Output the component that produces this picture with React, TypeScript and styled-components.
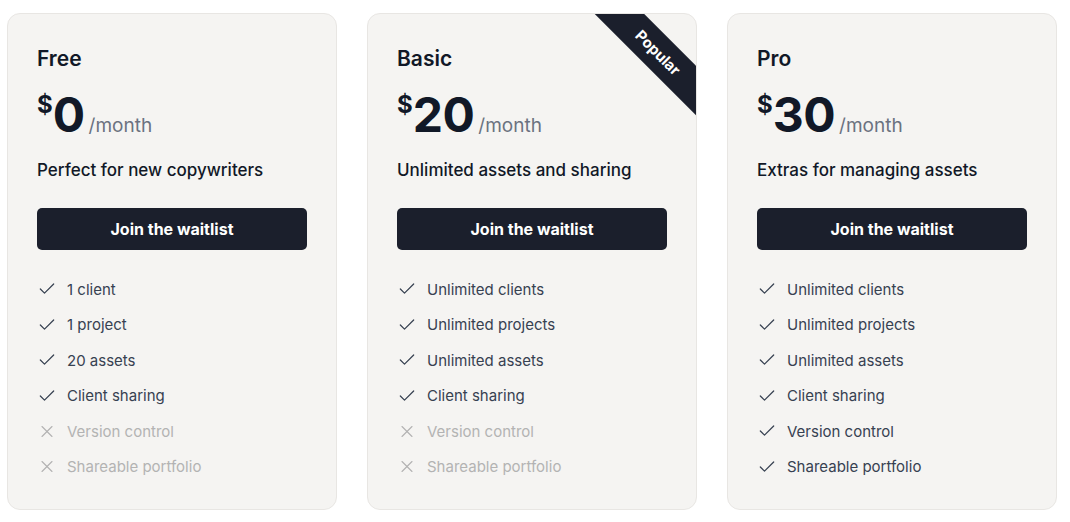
import * as React from "react";
import styled, { createGlobalStyle } from "styled-components";
import { Check, X } from "lucide-react";

interface IFeature {
  label: string;
  included: boolean;
}

interface IPlan {
  name: string;
  price: number;
  tagline: string;
  popular?: boolean;
  features: IFeature[];
}

const feature = (label: string, included = true): IFeature => ({ label, included });

const plans: IPlan[] = [
  {
    name: "Free",
    price: 0,
    tagline: "Perfect for new copywriters",
    features: [
      feature("1 client"),
      feature("1 project"),
      feature("20 assets"),
      feature("Client sharing"),
      feature("Version control", false),
      feature("Shareable portfolio", false)
    ]
  },
  {
    name: "Basic",
    price: 20,
    tagline: "Unlimited assets and sharing",
    popular: true,
    features: [
      feature("Unlimited clients"),
      feature("Unlimited projects"),
      feature("Unlimited assets"),
      feature("Client sharing"),
      feature("Version control", false),
      feature("Shareable portfolio", false)
    ]
  },
  {
    name: "Pro",
    price: 30,
    tagline: "Extras for managing assets",
    features: [
      feature("Unlimited clients"),
      feature("Unlimited projects"),
      feature("Unlimited assets"),
      feature("Client sharing"),
      feature("Version control"),
      feature("Shareable portfolio")
    ]
  }
];

const PlanCard = ({ plan }: { plan: IPlan }) => (
  <Card>
    {plan.popular && <Ribbon>Popular</Ribbon>}
    <PlanName>{plan.name}</PlanName>
    <PriceRow>
      <Currency>$</Currency>
      <Amount>{plan.price}</Amount>
      <Period>/month</Period>
    </PriceRow>
    <Tagline>{plan.tagline}</Tagline>
    <WaitlistButton type="button">Join the waitlist</WaitlistButton>
    <FeatureList>
      {plan.features.map(f => (
        <FeatureItem key={f.label} included={f.included}>
          <FeatureIcon>
            {f.included ? <Check size={20} strokeWidth={1.5} /> : <X size={23} strokeWidth={1.3} />}
          </FeatureIcon>
          {f.label}
        </FeatureItem>
      ))}
    </FeatureList>
  </Card>
);

export default function App() {
  return (
    <>
      <GlobalStyle />
      <Pricing>
        {plans.map(p => (
          <PlanCard key={p.name} plan={p} />
        ))}
      </Pricing>
    </>
  );
}

const GlobalStyle = createGlobalStyle`
  body {
    margin: 0;
    background: #ffffff;
    font-family: Inter, "Noto Sans", sans-serif;
    color: #111827;
  }
`;

const Pricing = styled.div`
  display: grid;
  grid-template-columns: repeat(3, 330px);
  gap: 30px;
  padding: 13px 0 0 7px;
`;

const Card = styled.div`
  position: relative;
  overflow: hidden;
  display: flex;
  flex-direction: column;
  padding: 31px 29px 30px;
  background: #f5f4f2;
  border: 1px solid #e8e6e3;
  border-radius: 13px;
`;

const Ribbon = styled.div`
  position: absolute;
  top: 20.5px;
  right: -62px;
  width: 200px;
  height: 35px;
  display: flex;
  align-items: center;
  justify-content: center;
  background: #1b1f2c;
  color: #ffffff;
  font-size: 15px;
  font-weight: 700;
  transform: rotate(45deg);
`;

const PlanName = styled.h2`
  margin: 0;
  font-size: 21px;
  line-height: 28px;
  font-weight: 600;
  color: #111827;
`;

const PriceRow = styled.div`
  display: flex;
  align-items: baseline;
  margin-top: 17.5px;
  height: 48px;
`;

const Currency = styled.span`
  align-self: flex-start;
  margin-top: 2px;
  font-size: 24px;
  line-height: 24px;
  font-weight: 700;
`;

const Amount = styled.span`
  font-size: 48px;
  line-height: 48px;
  font-weight: 700;
  letter-spacing: -0.5px;
`;

const Period = styled.span`
  margin-left: 4px;
  font-size: 19px;
  font-weight: 400;
  color: #6b7280;
`;

const Tagline = styled.p`
  margin: 17px 0 0;
  font-size: 17px;
  line-height: 28px;
  font-weight: 500;
  color: #111827;
`;

const WaitlistButton = styled.button`
  margin-top: 24.5px;
  height: 42px;
  border: none;
  border-radius: 5px;
  background: #1b1f2c;
  color: #ffffff;
  font-family: inherit;
  font-size: 16px;
  font-weight: 700;
  cursor: pointer;
`;

const FeatureList = styled.ul`
  list-style: none;
  margin: 27px 0 0;
  padding: 0;
  display: flex;
  flex-direction: column;
  gap: 11.6px;
`;

const FeatureItem = styled.li<{ included: boolean }>`
  display: flex;
  align-items: center;
  gap: 10px;
  height: 24px;
  font-size: 15px;
  color: ${props => (props.included ? "#374151" : "#b3b3b3")};
`;

const FeatureIcon = styled.span`
  width: 20px;
  height: 24px;
  display: flex;
  align-items: center;
  justify-content: center;
`;
